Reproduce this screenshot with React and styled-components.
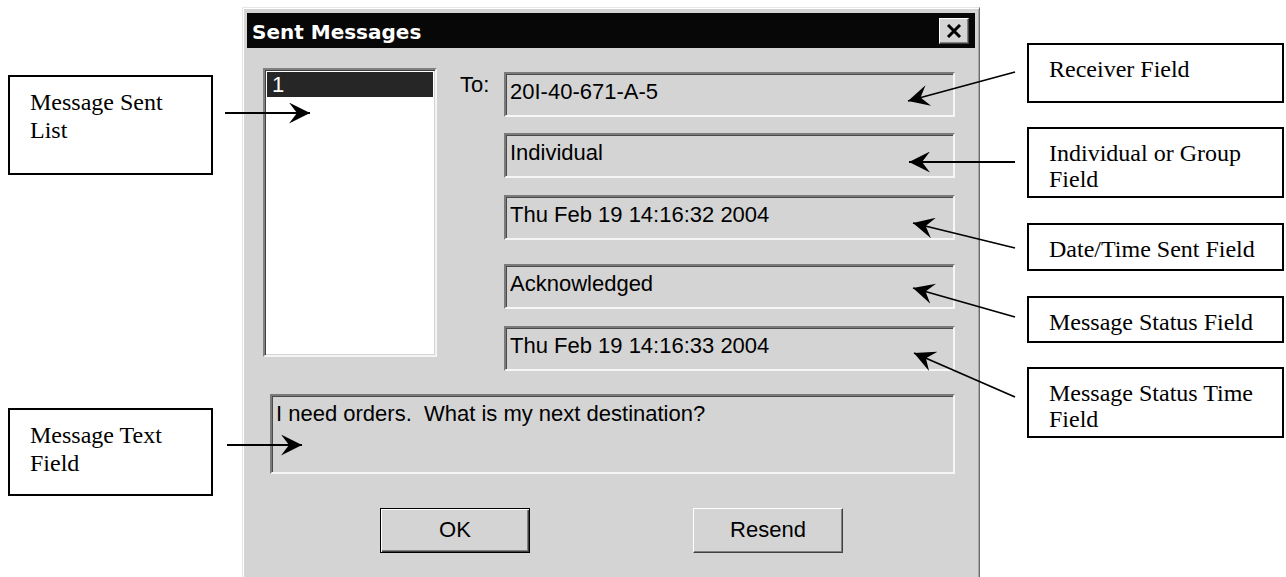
import styled, { createGlobalStyle } from "styled-components";

const GlobalStyle = createGlobalStyle`
  html, body {
    margin: 0;
    padding: 0;
    background: #fff;
    overflow: hidden;
  }
`;

const Page = styled.div`
  position: relative;
  width: 1286px;
  height: 577px;
  display: flex;
  align-items: flex-start;
  overflow: hidden;
`;

const Column = styled.div`
  display: flex;
  flex-direction: column;
  flex-shrink: 0;
  width: ${(p) => p.width}px;
  margin-left: ${(p) => p.offset}px;
`;

const Callout = styled.div`
  box-sizing: border-box;
  height: ${(p) => p.h}px;
  margin-top: ${(p) => p.top}px;
  border: 2px solid #000;
  padding: 11px 6px 0 20px;
  font-family: "Liberation Serif", "Times New Roman", serif;
  font-size: 24px;
  line-height: ${(p) => p.lh || 27}px;
  white-space: nowrap;
  color: #000;
`;

/* ---- dialog ---- */

const Dialog = styled.div`
  box-sizing: border-box;
  flex-shrink: 0;
  width: 738px;
  margin-left: 29px;
  margin-top: 7px;
  padding: 5px 4px 40px 4px;
  background: #d4d4d4;
  border: 1px solid;
  border-color: #e6e6e6 #6e6e6e #6e6e6e #e6e6e6;
  box-shadow: inset 1px 1px 0 #fff, inset -1px -1px 0 #a6a6a6;
  font-family: "Liberation Sans", Arial, sans-serif;
  font-size: 22px;
  color: #000;
`;

const TitleBar = styled.div`
  height: 35px;
  display: flex;
  align-items: center;
  justify-content: space-between;
  padding: 0 6px 0 5px;
  background: #070707;
`;

const Title = styled.span`
  padding-top: 3px;
  font-family: "DejaVu Sans", Verdana, sans-serif;
  font-weight: bold;
  font-size: 20px;
  color: #fff;
`;

const CloseButton = styled.div`
  box-sizing: border-box;
  width: 30px;
  height: 26px;
  margin-top: 1px;
  display: flex;
  align-items: center;
  justify-content: center;
  background: #d4d4d4;
  border: 1px solid;
  border-color: #fff #404040 #404040 #fff;
  box-shadow: inset -1px -1px 0 #808080;
`;

const Body = styled.div`
  padding: 20px 20px 0 16px;
`;

const TopRow = styled.div`
  display: flex;
  gap: 23px;
`;

const ListBox = styled.div`
  box-sizing: border-box;
  width: 174px;
  height: 289px;
  padding: 2px;
  background: #fff;
  border: 2px solid;
  border-color: #808080 #f4f4f4 #f4f4f4 #808080;
  box-shadow: inset 1px 1px 0 #404040, inset -1px -1px 0 #d4d4d4;
`;

const ListItem = styled.div`
  height: 25px;
  line-height: 25px;
  padding-left: 5px;
  background: ${(p) => (p.selected ? "#262626" : "transparent")};
  color: ${(p) => (p.selected ? "#fff" : "#000")};
`;

const FieldColumn = styled.div`
  flex: 1;
  display: flex;
  flex-direction: column;
`;

const FieldRow = styled.div`
  display: flex;
  margin-top: ${(p) => p.top}px;
`;

const Label = styled.div`
  width: 44px;
  flex-shrink: 0;
`;

const Field = styled.div`
  box-sizing: border-box;
  flex: 1;
  height: 45px;
  padding: 5px 4px 0 4px;
  background: #d4d4d4;
  border: 2px solid;
  border-color: #7a7a7a #f6f6f6 #f6f6f6 #7a7a7a;
  box-shadow: inset 1px 1px 0 #4a4a4a;
  white-space: pre;
`;

const MessageBox = styled(Field)`
  height: 80px;
  margin: 23px 0 0 7px;
`;

const ButtonRow = styled.div`
  display: flex;
  justify-content: center;
  gap: 163px;
  margin-top: 34px;
  padding-left: 5px;
`;

const Button = styled.div`
  box-sizing: border-box;
  width: 150px;
  height: 45px;
  display: flex;
  align-items: center;
  justify-content: center;
  padding-bottom: 2px;
  background: #d4d4d4;
  border: 1px solid;
  border-color: ${(p) => (p.primary ? "#000" : "#fff #404040 #404040 #fff")};
  box-shadow: ${(p) =>
    p.primary
      ? "inset 1px 1px 0 #fff, inset -1px -1px 0 #404040, inset -2px -2px 0 #808080"
      : "inset -1px -1px 0 #808080"};
`;

const Overlay = styled.svg`
  position: absolute;
  left: 0;
  top: 0;
  pointer-events: none;
`;

const arrows = [
  [225, 113, 310, 113],
  [227, 445, 302, 445],
  [1015, 72, 908, 101],
  [1015, 162, 909, 162],
  [1015, 248, 913, 223],
  [1015, 317, 913, 288],
  [1015, 397, 914, 353],
];

const fields = [
  { top: 4, label: "To:", value: "20I-40-671-A-5" },
  { top: 16, value: "Individual" },
  { top: 17, value: "Thu Feb 19 14:16:32 2004" },
  { top: 24, value: "Acknowledged" },
  { top: 17, value: "Thu Feb 19 14:16:33 2004" },
];

export default function App() {
  return (
    <>
      <GlobalStyle />
      <Page>
        <Column width={205} offset={8}>
          <Callout top={75} h={100} lh={28}>
            Message Sent
            <br />
            List
          </Callout>
          <Callout top={233} h={88} lh={28}>
            Message Text
            <br />
            Field
          </Callout>
        </Column>

        <Dialog>
          <TitleBar>
            <Title>Sent Messages</Title>
            <CloseButton>
              <svg width="16" height="14" viewBox="0 0 16 14">
                <path d="M2 1 L14 13 M14 1 L2 13" stroke="#000" strokeWidth="3" />
              </svg>
            </CloseButton>
          </TitleBar>
          <Body>
            <TopRow>
              <ListBox>
                <ListItem selected>1</ListItem>
              </ListBox>
              <FieldColumn>
                {fields.map((f, i) => (
                  <FieldRow key={i} top={f.top}>
                    <Label>{f.label}</Label>
                    <Field>{f.value}</Field>
                  </FieldRow>
                ))}
              </FieldColumn>
            </TopRow>
            <MessageBox>I need orders.  What is my next destination?</MessageBox>
            <ButtonRow>
              <Button primary>OK</Button>
              <Button>Resend</Button>
            </ButtonRow>
          </Body>
        </Dialog>

        <Column width={257} offset={47}>
          <Callout top={43} h={60} lh={26}>
            Receiver Field
          </Callout>
          <Callout top={24} h={71} lh={26}>
            Individual or Group
            <br />
            Field
          </Callout>
          <Callout top={25} h={48} lh={26}>
            Date/Time Sent Field
          </Callout>
          <Callout top={25} h={47} lh={26}>
            Message Status Field
          </Callout>
          <Callout top={24} h={71} lh={26}>
            Message Status Time
            <br />
            Field
          </Callout>
        </Column>

        <Overlay width="1286" height="577">
          <defs>
            <marker
              id="head"
              viewBox="0 0 21 21"
              markerWidth="21"
              markerHeight="21"
              refX="21"
              refY="10.5"
              orient="auto"
              markerUnits="userSpaceOnUse"
            >
              <path d="M21 10.5 L0 0 L8 10.5 L0 21 Z" fill="#000" />
            </marker>
          </defs>
          {arrows.map(([x1, y1, x2, y2], i) => (
            <line
              key={i}
              x1={x1}
              y1={y1}
              x2={x2}
              y2={y2}
              stroke="#000"
              strokeWidth="1.8"
              markerEnd="url(#head)"
            />
          ))}
        </Overlay>
      </Page>
    </>
  );
}
